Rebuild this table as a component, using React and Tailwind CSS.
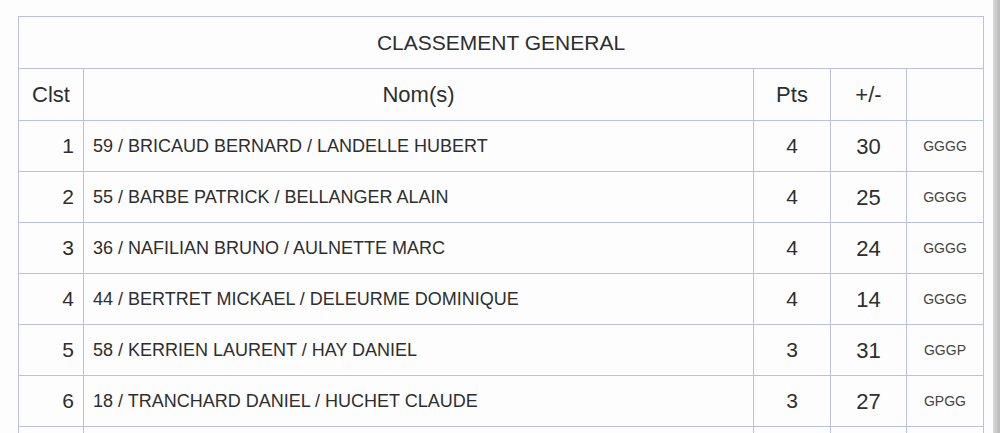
const rows = [
  { rank: 1, name: '59 / BRICAUD BERNARD / LANDELLE HUBERT', pts: 4, diff: 30, res: 'GGGG' },
  { rank: 2, name: '55 / BARBE PATRICK / BELLANGER ALAIN', pts: 4, diff: 25, res: 'GGGG' },
  { rank: 3, name: '36 / NAFILIAN BRUNO / AULNETTE MARC', pts: 4, diff: 24, res: 'GGGG' },
  { rank: 4, name: '44 / BERTRET MICKAEL / DELEURME DOMINIQUE', pts: 4, diff: 14, res: 'GGGG' },
  { rank: 5, name: '58 / KERRIEN LAURENT / HAY DANIEL', pts: 3, diff: 31, res: 'GGGP' },
  { rank: 6, name: '18 / TRANCHARD DANIEL / HUCHET CLAUDE', pts: 3, diff: 27, res: 'GPGG' },
  { rank: '', name: '', pts: '', diff: '', res: '' },
]

const cell = 'border border-[#b9c1dc]'

export default function App() {
  return (
    <div className="flex h-[433px] w-[1000px] overflow-hidden bg-white font-['Liberation_Sans',Arial,sans-serif] text-[#2e2e2e]">
      <div className="w-[993px] bg-[#fdfdfd] pl-[18px] pt-[16px]">
        <table className="table-fixed border-collapse">
          <colgroup>
            <col className="w-[65px]" />
            <col className="w-[670px]" />
            <col className="w-[77px]" />
            <col className="w-[76px]" />
            <col className="w-[77px]" />
          </colgroup>
          <thead>
            <tr className="h-[52px]">
              <th colSpan={5} className={`${cell} text-[21px] font-normal`}>CLASSEMENT GENERAL</th>
            </tr>
            <tr className="h-[52px]">
              <th className={`${cell} text-[22px] font-normal`}>Clst</th>
              <th className={`${cell} text-[22px] font-normal`}>Nom(s)</th>
              <th className={`${cell} text-[22px] font-normal`}>Pts</th>
              <th className={`${cell} text-[22px] font-normal`}>+/-</th>
              <th className={cell}></th>
            </tr>
          </thead>
          <tbody>
            {rows.map((r, i) => (
              <tr key={i} className="h-[51px]">
                <td className={`${cell} pr-[9px] text-right text-[21px]`}>{r.rank}</td>
                <td className={`${cell} pl-[9px] text-[18px]`}>{r.name}</td>
                <td className={`${cell} text-center text-[21px]`}>{r.pts}</td>
                <td className={`${cell} text-center text-[22px]`}>{r.diff}</td>
                <td className={`${cell} text-center text-[14px] text-[#444]`}>{r.res}</td>
              </tr>
            ))}
          </tbody>
        </table>
      </div>
      <div className="flex-1 bg-gradient-to-r from-[#d8d8d8] to-[#b8b8b8]" />
    </div>
  )
}
